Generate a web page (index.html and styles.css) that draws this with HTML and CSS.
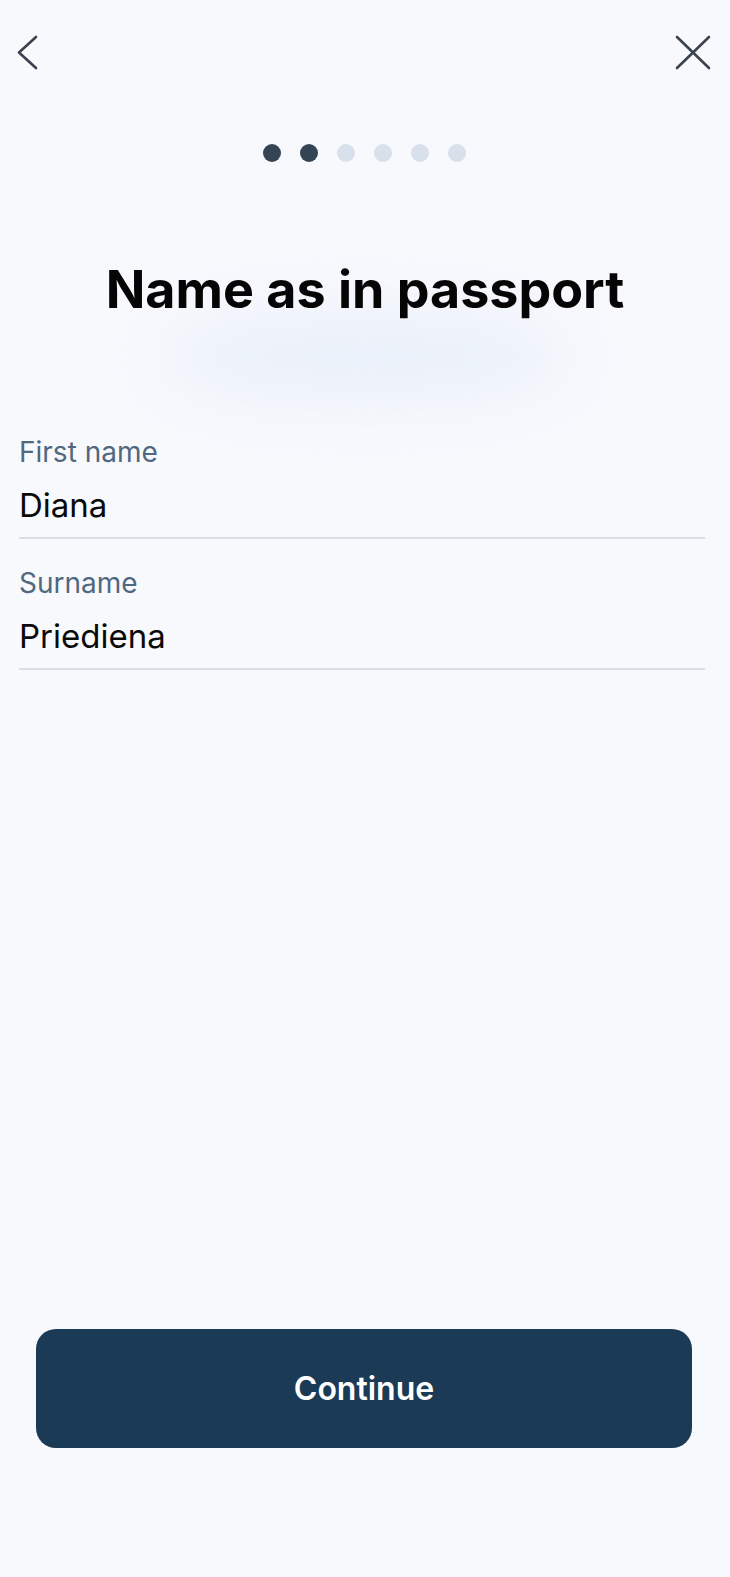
FILE: index.html
```html
<!DOCTYPE html>
<html lang="en">
<head>
<meta charset="utf-8">
<title>Name as in passport</title>
<link rel="stylesheet" href="styles.css">
</head>
<body>
<div class="page">
  <header class="topbar">
    <svg class="icon-back" width="22" height="36" viewBox="0 0 22 36" aria-label="Back">
      <path d="M19 2 L2 17.5 L19 33" fill="none" stroke="#39424e" stroke-width="2.6" stroke-linecap="round" stroke-linejoin="round"/>
    </svg>
    <svg class="icon-close" width="36" height="36" viewBox="0 0 36 36" aria-label="Close">
      <path d="M2 2 L34 33 M34 2 L2 33" fill="none" stroke="#39424e" stroke-width="2.6" stroke-linecap="round"/>
    </svg>
  </header>

  <div class="steps">
    <span class="dot on"></span>
    <span class="dot on"></span>
    <span class="dot"></span>
    <span class="dot"></span>
    <span class="dot"></span>
    <span class="dot"></span>
  </div>

  <div class="title-wrap">
    <h1 class="title">Name as in passport</h1>
  </div>

  <div class="fields">
    <div class="field">
      <div class="label">First name</div>
      <div class="value">Diana</div>
    </div>
    <div class="field">
      <div class="label">Surname</div>
      <div class="value">Priediena</div>
    </div>
  </div>

  <div class="actions">
    <button class="btn">Continue</button>
  </div>
</div>
</body>
</html>
```

FILE: styles.css
```css
html, body {
  margin: 0;
  padding: 0;
  background: #f8f9fd;
}

body {
  font-family: Inter, "Noto Sans", sans-serif;
  color: #0a0a0a;
}

.page {
  min-height: 1577px;
  display: flex;
  flex-direction: column;
}

.topbar {
  display: flex;
  justify-content: space-between;
  align-items: flex-start;
  padding: 35px 19px 0 17px;
  height: 36px;
}

.icon-back,
.icon-close {
  display: block;
}

.steps {
  display: flex;
  justify-content: center;
  gap: 19px;
  margin-top: 73px;
  padding-right: 2px;
}

.dot {
  width: 18px;
  height: 18px;
  border-radius: 50%;
  background: #d8e0eb;
}

.dot.on {
  background: #334455;
}

.title-wrap {
  position: relative;
  margin-top: 94px;
}

.title-wrap::before {
  content: "";
  position: absolute;
  left: 160px;
  right: 160px;
  top: 56px;
  height: 88px;
  border-radius: 50%;
  background: #e9f0f9;
  filter: blur(32px);
  z-index: 0;
}

.title {
  position: relative;
  z-index: 1;
  margin: 0;
  text-align: center;
  font-size: 52px;
  line-height: 68px;
  font-weight: 700;
  letter-spacing: 0;
  color: #050505;
}

.fields {
  margin-top: 111px;
  padding: 0 25px 0 19px;
  display: flex;
  flex-direction: column;
  gap: 27px;
}

.field {
  border-bottom: 2px solid #dcdee7;
  padding-bottom: 12px;
}

.label {
  font-size: 28px;
  line-height: 34px;
  color: #506880;
  margin-bottom: 16px;
}

.value {
  font-size: 33px;
  line-height: 40px;
  color: #0a0a0a;
}

.actions {
  margin-top: auto;
  padding: 0 38px 129px 36px;
}

.btn {
  display: block;
  width: 100%;
  height: 119px;
  border: none;
  border-radius: 20px;
  background: #1b3a55;
  color: #ffffff;
  font-family: Inter, "Noto Sans", sans-serif;
  font-size: 32px;
  font-weight: 600;
  cursor: pointer;
}
```
